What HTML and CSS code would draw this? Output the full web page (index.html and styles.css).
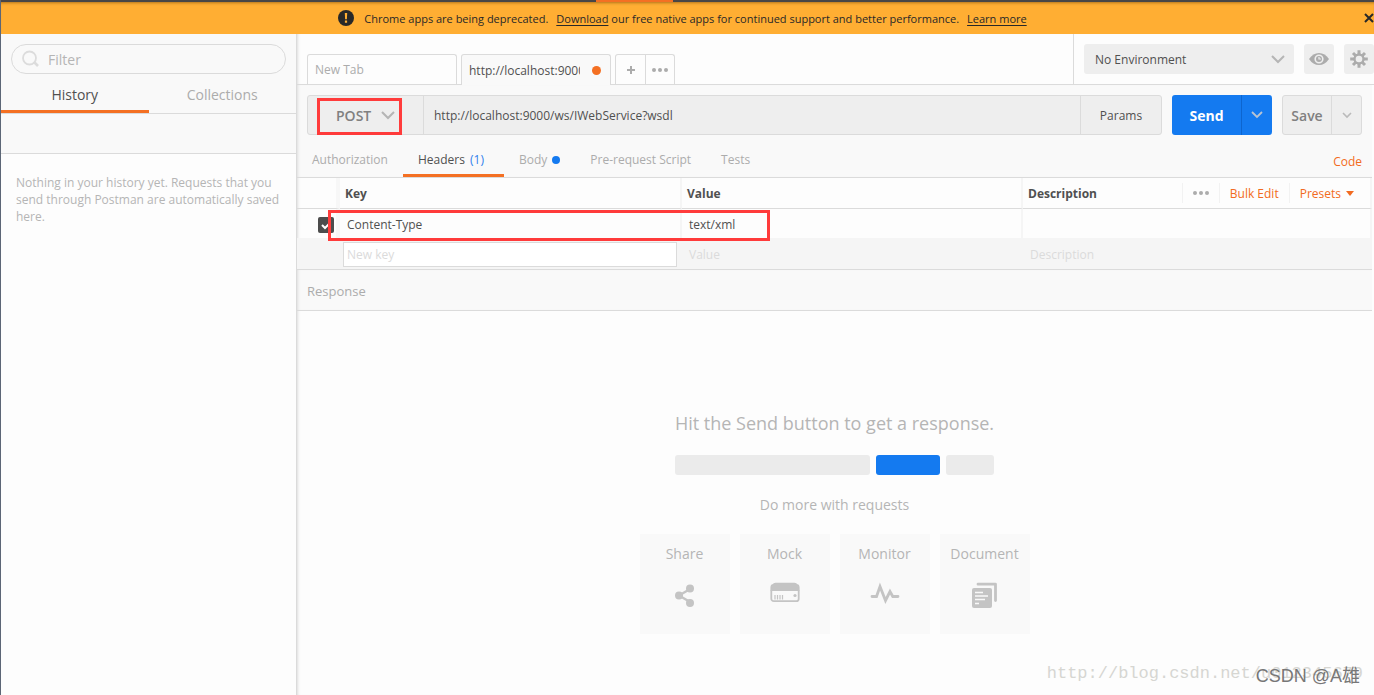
FILE: index.html
```html
<!DOCTYPE html>
<html lang="en">
<head>
<meta charset="utf-8">
<title>Postman</title>
<link rel="stylesheet" href="styles.css">
</head>
<body>
<div class="app">
  <div class="strip"><span class="strip-active"></span></div>
  <div class="banner">
    <svg class="banner-icon" width="16" height="16" viewBox="0 0 16 16"><circle cx="8" cy="8" r="8" fill="#282828"/><path d="M6.8 3h2.4l-.3 6.2H7.1zM6.9 10.6h2.2v2.2H6.9z" fill="#ffae33"/></svg>
    <p class="banner-text"><span>Chrome apps are being deprecated.</span> <span><a href="#">Download</a> our free native apps for continued support and better performance.</span> <a href="#">Learn more</a></p>
    <button class="banner-close" aria-label="Close"><svg width="10" height="10" viewBox="0 0 10 10"><path d="M1 1l8 8M9 1L1 9" stroke="#282828" stroke-width="2"/></svg></button>
  </div>
  <div class="body">
    <aside class="sidebar">
      <div class="side-head">
        <label class="filter">
          <svg width="18" height="18" viewBox="0 0 18 18" fill="none" stroke="#dcdcdc"><circle cx="7.500" cy="8" r="6.500" stroke-width="1.800"/><path d="M12 12l4 4" stroke-width="2.600"/></svg>
          <input type="text" placeholder="Filter" aria-label="Filter">
        </label>
        <div class="side-tabs">
          <button class="side-tab active">History</button>
          <button class="side-tab">Collections</button>
        </div>
      </div>
      <div class="side-tools"></div>
      <p class="side-empty">Nothing in your history yet. Requests that you send through Postman are automatically saved here.</p>
    </aside>
    <main class="main">
      <div class="topbar">
        <div class="tabs">
          <button class="tab">New Tab</button>
          <button class="tab current"><span class="tab-name">http://localhost:9000</span><span class="unsaved"></span></button>
          <div class="tab-actions">
            <button aria-label="Add tab"><svg width="8" height="8" viewBox="0 0 8 8"><path d="M4 0v8M0 4h8" stroke="#acacac" stroke-width="2"/></svg></button>
            <button aria-label="Tab options"><svg width="16" height="4" viewBox="0 0 16 4" fill="#acacac"><circle cx="2" cy="2" r="2"/><circle cx="8" cy="2" r="2"/><circle cx="14" cy="2" r="2"/></svg></button>
          </div>
        </div>
        <div class="env">
          <div class="env-select">
            <select aria-label="Environment"><option>No Environment</option></select>
            <svg class="chev" width="14" height="9" viewBox="0 0 14 9"><path d="M1 1l6 6 6-6" fill="none" stroke="#b5b5b5" stroke-width="2"/></svg>
          </div>
          <button class="icon-btn" aria-label="Environment quick look"><svg width="20" height="12" viewBox="0 0 20 12"><path d="M0 6Q4 0 10 0t10 6q-4 6-10 6T0 6z" fill="#acacac"/><circle cx="10" cy="6" r="3.800" fill="#acacac" stroke="#eee" stroke-width="1.600"/><path d="M10 4v2h2" fill="none" stroke="#eee" stroke-width="1.200"/></svg></button>
          <button class="icon-btn" aria-label="Settings"><svg width="18" height="18" viewBox="-9 -9 18 18" stroke="#acacac"><path d="M0-8.800V8.800M-8.800 0H8.800M-6 -6L6 6M6 -6L-6 6" stroke-width="3"/><circle r="5.200" fill="#acacac"/><circle r="3.300" fill="#eee" stroke="none"/></svg></button>
        </div>
      </div>
      <section class="request">
        <div class="url-row">
          <div class="url-box">
            <button class="method">POST <svg width="14" height="9" viewBox="0 0 14 9"><path d="M1 1l6 6 6-6" fill="none" stroke="#b5b5b5" stroke-width="2"/></svg><span class="mark mark-method"></span></button>
            <input class="url" type="text" value="http://localhost:9000/ws/IWebService?wsdl" aria-label="Request URL">
            <button class="params">Params</button>
          </div>
          <div class="split send"><button>Send</button><button class="more" aria-label="Send options"><svg width="12" height="8" viewBox="0 0 12 8"><path d="M1 1l5 5 5-5" fill="none" stroke="#b9c4d2" stroke-width="1.800"/></svg></button></div>
          <div class="split save"><button>Save</button><button class="more" aria-label="Save options"><svg width="10" height="7" viewBox="0 0 10 7"><path d="M1 1l4 4 4-4" fill="none" stroke="#bababa" stroke-width="1.600"/></svg></button></div>
        </div>
        <div class="req-tabs">
          <button class="req-tab">Authorization</button>
          <button class="req-tab on">Headers <span class="count">(1)</span></button>
          <button class="req-tab body-tab">Body<span class="dot"></span></button>
          <button class="req-tab">Pre-request Script</button>
          <button class="req-tab">Tests</button>
          <a class="code" href="#">Code</a>
        </div>
      </section>
      <div class="grid-wrap">
        <table class="grid">
          <colgroup><col class="c-check"><col class="c-key"><col class="c-value"><col></colgroup>
          <thead><tr><th class="check"></th><th>Key</th><th>Value</th><th>
            <div class="desc-head"><span>Description</span>
              <div class="tools"><button aria-label="Column options"><svg width="16" height="4" viewBox="0 0 16 4" fill="#acacac"><circle cx="2" cy="2" r="2"/><circle cx="8" cy="2" r="2"/><circle cx="14" cy="2" r="2"/></svg></button><button>Bulk Edit</button><button>Presets <svg width="8" height="5" viewBox="0 0 8 5"><path d="M0 0h8L4 5z" fill="#f26b21"/></svg></button></div>
            </div></th></tr></thead>
          <tbody>
            <tr><td class="check"><input type="checkbox" checked aria-label="Enable Content-Type"></td><td>Content-Type</td><td>text/xml</td><td></td></tr>
            <tr class="new"><td></td><td class="new-key"><input type="text" placeholder="New key" aria-label="New key"></td><td>Value</td><td>Description</td></tr>
          </tbody>
        </table>
        <span class="mark mark-row"></span>
      </div>
      <h2 class="response">Response</h2>
      <section class="empty">
        <p class="hit">Hit the Send button to get a response.</p>
        <div class="bars"><span class="bar wide"></span><span class="bar blue"></span><span class="bar"></span></div>
        <p class="more-text">Do more with requests</p>
        <div class="cards">
          <button class="card">Share<svg width="30" height="30" viewBox="0 0 30 30" fill="#c4c4c4"><path d="M21 8.500L9 15.500l12 7" fill="none" stroke="#c4c4c4" stroke-width="2.400"/><circle cx="20" cy="8.500" r="4"/><circle cx="9" cy="15.500" r="4"/><circle cx="20" cy="23" r="4"/></svg></button>
          <button class="card">Mock<svg width="30" height="30" viewBox="0 0 30 30"><rect x="1.300" y="5" width="27.400" height="16.200" rx="2.500" fill="#f9f9f9" stroke="#c4c4c4" stroke-width="1.800"/><path d="M.5 11L2.500 5q.6-2.200 3-2.200h19q2.400 0 3 2.200l2 6z" fill="#c4c4c4"/><path d="M5 15v4.500M7.500 15v4.500M10 15v4.500M12.500 15v4.500" stroke="#c4c4c4" stroke-width="1.200"/><circle cx="25" cy="15.500" r="1.600" fill="#c4c4c4"/></svg></button>
          <button class="card">Monitor<svg width="30" height="30" viewBox="0 0 30 30"><path d="M2 16.500h4.500L10 6.500l5.500 14 4.500-9 2.800 5H28" fill="none" stroke="#c4c4c4" stroke-width="2.800" stroke-linecap="round"/></svg></button>
          <button class="card">Document<svg width="30" height="30" viewBox="0 0 30 30"><path d="M8 4.200h17.500V20.500" fill="none" stroke="#c4c4c4" stroke-width="2.800" stroke-linecap="round" stroke-linejoin="round"/><rect x="2" y="8" width="20" height="20" rx="2" fill="#c4c4c4"/><path d="M5 12.500h8M5 16h13M5 19.500h10M5 23.500h4" stroke="#f9f9f9" stroke-width="1.500"/></svg></button>
        </div>
      </section>
    </main>
  </div>
  <span class="wm wm-url">http://blog.csdn.net/u012345679</span>
  <span class="wm wm-csdn">CSDN @A雄</span>
</div>
</body>
</html>
```

FILE: styles.css
```css
* { box-sizing: border-box; }
body { margin: 0; font: 12px/17px "Open Sans", "Noto Sans", sans-serif; color: #505050; background: #fdfdfd; }
p, h2 { margin: 0; }
button, input, select { font: inherit; color: inherit; border: 0; background: none; padding: 0; margin: 0; outline: 0; }
svg { display: block; flex: none; }
.app { position: relative; min-height: 100vh; display: flex; flex-direction: column; overflow: hidden; border-left: 1px solid #5c6676; }
.strip { height: 2px; background: #484646; display: flex; justify-content: center; padding-right: 106px; }
.strip-active { width: 77px; background: #f47023; }
.banner { height: 32px; display: flex; align-items: center; justify-content: center; background: #ffae33; box-shadow: inset 0 3px 3px -2px #b0741c; color: #282828; position: relative; }
.banner-icon { margin-right: 10px; }
.banner-text { display: flex; gap: 8px; padding-right: 10px; font-size: 11px; }
.banner a { color: inherit; text-underline-offset: 2px; }
.banner-close { position: absolute; right: 0; top: 11px; }
.body { flex: 1; display: flex; }
.sidebar { width: 295px; flex: none; background: #fdfdfd; }
.side-head { background: #f9f9f9; padding-top: 10px; border-bottom: 1px solid #dbdbdb; }
.filter { height: 30px; margin: 0 10px; display: flex; align-items: center; gap: 8px; padding: 0 10px; border: 1px solid #dbdbdb; border-radius: 15px; font-size: 14px; }
.filter input { flex: 1; min-width: 0; }
::placeholder { color: #b5b5b5; opacity: 1; }
.side-tabs { display: flex; height: 39px; }
.side-tab { flex: 1; padding-top: 4px; font-size: 14px; color: #acacac; border-bottom: 3px solid transparent; }
.side-tab.active { color: #505050; border-color: #f47023; }
.side-tools { height: 40px; background: #f9f9f9; border-bottom: 1px solid #dbdbdb; }
.side-empty { padding: 20px 15px; color: #b5b5b5; }
.main { flex: 1; min-width: 0; display: flex; flex-direction: column; padding-right: 2px; border-left: 1px solid #dbdbdb; box-shadow: inset 3px 0 3px -2px #ddd; }
.topbar { height: 51px; display: flex; justify-content: space-between; border-bottom: 1px solid #dbdbdb; margin-right: -2px; }
.tabs { display: flex; gap: 4px; align-items: flex-end; padding-left: 10px; }
.tab { width: 150px; height: 30px; display: flex; align-items: center; gap: 12px; padding: 0 7px; border: 1px solid #dbdbdb; border-bottom: 0; border-radius: 3px 3px 0 0; color: #acacac; }
.tab.current { height: 31px; margin-bottom: -1px; background: #f9f9f9; color: #505050; }
.tab-name { width: 111px; overflow: hidden; white-space: nowrap; text-align: left; }
.unsaved { width: 9px; height: 9px; border-radius: 50%; background: #f47023; }
.tab-actions { display: flex; height: 30px; border: 1px solid #dbdbdb; border-bottom: 0; border-radius: 3px 3px 0 0; }
.tab-actions button { width: 29px; display: grid; place-items: center; }
.tab-actions button + button { border-left: 1px solid #dbdbdb; }
.env { display: flex; gap: 10px; padding: 10px 0 0 10px; border-left: 1px solid #dbdbdb; }
.env-select { position: relative; width: 210px; height: 30px; }
.env-select select { appearance: none; width: 100%; height: 100%; padding: 0 11px; border-radius: 3px; background: #eee; }
.chev { position: absolute; right: 9px; top: 11px; pointer-events: none; }
.icon-btn { width: 30px; height: 30px; display: grid; place-items: center; border-radius: 3px; background: #eee; }
.request { background: #f9f9f9; border-bottom: 1px solid #dbdbdb; box-shadow: inset 3px 0 3px -2px #ddd; }
.url-row { display: flex; gap: 10px; padding: 10px 10px 0; }
.url-box { flex: 1; min-width: 0; height: 40px; display: flex; border: 1px solid #dbdbdb; border-radius: 3px; background: #eee; }
.method { position: relative; width: 116px; display: flex; align-items: center; gap: 10px; padding-left: 28px; font-size: 14px; font-weight: 600; color: #808080; border-right: 1px solid #dbdbdb; }
.mark { position: absolute; border: 3px solid #ff3b3b; pointer-events: none; }
.mark-method { left: 9px; top: 2px; width: 85px; height: 37px; }
.url { flex: 1; min-width: 0; padding: 0 10px; }
.params { width: 81px; border-left: 1px solid #dbdbdb; }
.split { height: 40px; display: flex; border-radius: 3px; font-size: 14px; }
.split button { display: grid; place-items: center; }
.send { background: #147af0; color: #fff; font-weight: 700; }
.send button { width: 69px; }
.send .more { width: 31px; border-left: 1px solid #0d65cf; }
.save { background: #eee; border: 1px solid #dbdbdb; color: #808080; font-weight: 600; }
.save button { width: 48px; }
.save .more { width: 30px; border-left: 1px solid #dbdbdb; }
.req-tabs { display: flex; height: 42px; padding: 8px 10px 0 0; }
.req-tab { padding: 2px 15px 0; border-bottom: 3px solid transparent; color: #acacac; white-space: nowrap; }
.req-tab.on { color: #505050; border-color: #f47023; padding: 2px 20px 0 15px; }
.count { color: #2f80ed; margin-left: 2px; }
.body-tab { display: flex; align-items: center; gap: 5px; }
.dot { width: 8px; height: 8px; border-radius: 50%; background: #147af0; }
.code { margin: 10px 0 0 auto; color: #f26b21; text-decoration: none; }
.grid-wrap { position: relative; border-bottom: 1px solid #dbdbdb; }
.grid { width: 100%; table-layout: fixed; border-collapse: separate; border-spacing: 0; }
.c-check { width: 43px; }
.c-key { width: 342px; }
.c-value { width: 341px; }
.grid th { height: 31px; padding: 0 0 0 5px; text-align: left; font-weight: 700; border-bottom: 1px solid #dbdbdb; border-right: 2px solid #f5f5f5; }
.grid td { height: 29px; padding: 2px 0 0 7px; border-right: 2px solid #f5f5f5; }
.grid .check { padding: 2px 0 0 21px; border-right: 4px solid #f7f7f7; }
.check input { appearance: none; display: block; width: 16px; height: 16px; border-radius: 2px; background: #4c4c4c url("data:image/svg+xml,%3Csvg xmlns='http://www.w3.org/2000/svg' viewBox='0 0 16 16'%3E%3Cpath d='M4 8l3 3 5-5' fill='none' stroke='white' stroke-width='2'/%3E%3C/svg%3E"); }
.grid .new td { height: 31px; background: #f5f5f5; color: #dbdbdb; }
.grid .new .new-key { padding: 2px 3px 0 3px; }
.new-key input { display: block; width: 100%; height: 25px; padding: 0 3px; border: 1px solid #dbdbdb; background: #fff; }
.new-key ::placeholder { color: #dbdbdb; }
.desc-head, .tools { display: flex; align-items: center; justify-content: space-between; }
.tools { color: #f26b21; font-weight: 400; }
.tools button { height: 20px; display: flex; align-items: center; gap: 5px; padding: 0 10px; border-left: 1px solid #f2f2f2; }
.tools button:last-child { padding-right: 16px; }
.mark-row { left: 31px; top: 32px; width: 442px; height: 31px; }
.response { height: 41px; padding: 0 10px; font: 13px/42px "Open Sans", sans-serif; color: #acacac; background: #f9f9f9; border-bottom: 1px solid #dbdbdb; box-shadow: inset 3px 0 3px -2px #ddd; }
.empty { display: flex; flex-direction: column; align-items: center; padding-top: 100px; color: #b5b5b5; font-size: 14px; }
.hit { font-size: 18px; line-height: 24px; }
.bars { display: flex; gap: 6px; margin: 20px 0; }
.bar { width: 48px; height: 20px; border-radius: 3px; background: #ebebeb; }
.bar.wide { width: 195px; }
.bar.blue { width: 64px; background: #147af0; }
.more-text { line-height: 20px; margin-bottom: 19px; }
.cards { display: flex; gap: 10px; }
.card { width: 90px; height: 100px; display: flex; flex-direction: column; align-items: center; gap: 16px; padding-top: 10px; line-height: 20px; background: #f9f9f9; }
.wm { position: absolute; white-space: nowrap; pointer-events: none; }
.wm-url { right: 11px; bottom: 9px; font: 17px/24px "Liberation Mono", monospace; color: #d6d6d2; }
.wm-csdn { right: 14px; bottom: 8px; font: 18px/22px "Liberation Sans", "Noto Sans CJK SC", sans-serif; color: #777; }
```
